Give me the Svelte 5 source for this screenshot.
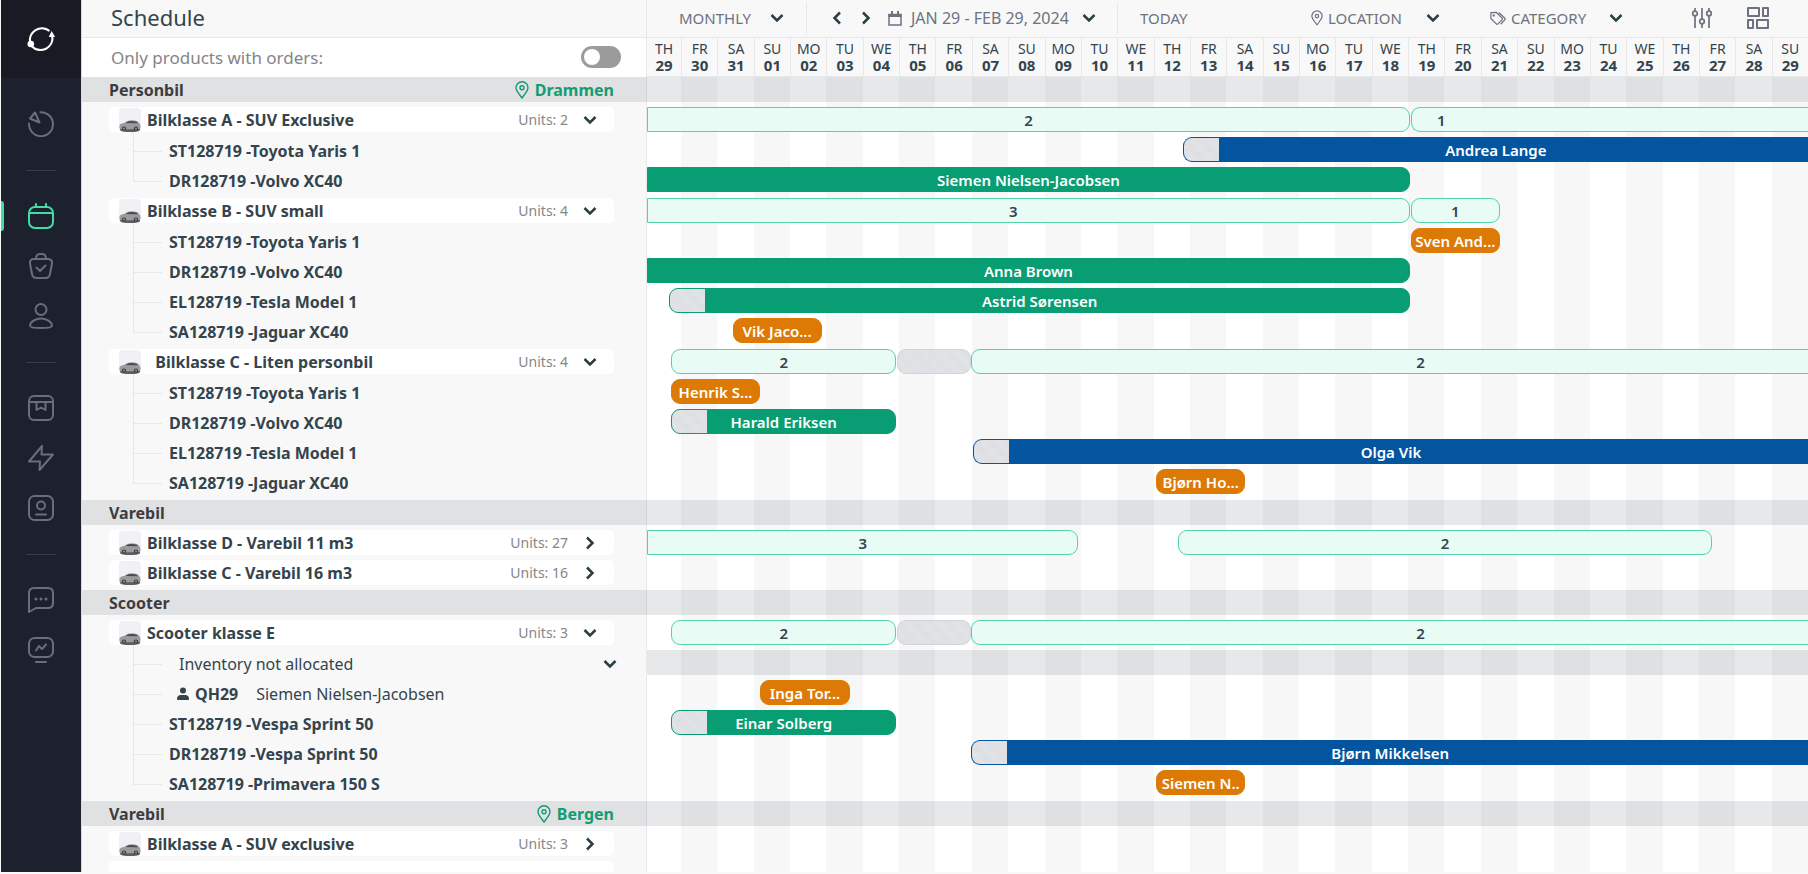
<script>
  // Day 0 is the left edge of the 30th; the 29th is the narrower first column.
  const FIRST = 34;
  const DAYS = 31;
  const EDGE = 31;

  const names = ['TH', 'FR', 'SA', 'SU', 'MO', 'TU', 'WE'];
  const days = Array.from({ length: 32 }, (_, i) => ({
    name: names[i % 7],
    num: String(i < 3 ? i + 29 : i - 2).padStart(2, '0')
  }));

  let onlyWithOrders = $state(false);
  let inventoryOpen = $state(true);

  let sections = $state([
    {
      title: 'Personbil',
      place: 'Drammen',
      categories: [
        {
          name: 'Bilklasse A - SUV Exclusive', units: 2, open: true,
          bars: [
            { kind: 'count', from: null, to: 20.05, text: '2' },
            { kind: 'count', from: 20.07, to: EDGE, text: '1', label: 15 }
          ],
          rows: [
            { name: 'ST128719 -Toyota Yaris 1', bars: [{ kind: 'blue', from: 13.8, to: EDGE, text: 'Andrea Lange', prep: true }] },
            { name: 'DR128719 -Volvo XC40', bars: [{ kind: 'green', from: null, to: 20.05, text: 'Siemen Nielsen-Jacobsen' }] }
          ]
        },
        {
          name: 'Bilklasse B - SUV small', units: 4, open: true,
          bars: [
            { kind: 'count', from: null, to: 20.05, text: '3', label: 96 },
            { kind: 'count', from: 20.07, to: 22.53, text: '1' }
          ],
          rows: [
            { name: 'ST128719 -Toyota Yaris 1', bars: [{ kind: 'orange', from: 20.07, to: 22.53, text: 'Sven And...' }] },
            { name: 'DR128719 -Volvo XC40', bars: [{ kind: 'green', from: null, to: 20.05, text: 'Anna Brown' }] },
            { name: 'EL128719 -Tesla Model 1', bars: [{ kind: 'green', from: -0.32, to: 20.05, text: 'Astrid Sørensen', prep: true }] },
            { name: 'SA128719 -Jaguar XC40', bars: [{ kind: 'orange', from: 1.42, to: 3.87, text: 'Vik Jaco...' }] }
          ]
        },
        {
          name: '\u00a0\u00a0Bilklasse C - Liten personbil', units: 4, open: true,
          bars: [
            { kind: 'count', from: -0.27, to: 5.92, text: '2' },
            { kind: 'idle', from: 5.93, to: 7.98, text: '' },
            { kind: 'count', from: 7.99, to: 32.7, text: '2' }
          ],
          rows: [
            { name: 'ST128719 -Toyota Yaris 1', bars: [{ kind: 'orange', from: -0.27, to: 2.17, text: 'Henrik S...' }] },
            { name: 'DR128719 -Volvo XC40', bars: [{ kind: 'green', from: -0.27, to: 5.92, text: 'Harald Eriksen', prep: true }] },
            { name: 'EL128719 -Tesla Model 1', bars: [{ kind: 'blue', from: 8.03, to: EDGE, text: 'Olga Vik', prep: true }] },
            { name: 'SA128719 -Jaguar XC40', bars: [{ kind: 'orange', from: 13.07, to: 15.52, text: 'Bjørn Ho...' }] }
          ]
        }
      ]
    },
    {
      title: 'Varebil',
      categories: [
        {
          name: 'Bilklasse D - Varebil 11 m3', units: 27, open: false,
          bars: [
            { kind: 'count', from: null, to: 10.93, text: '3' },
            { kind: 'count', from: 13.68, to: 28.35, text: '2' }
          ],
          rows: []
        },
        { name: 'Bilklasse C - Varebil 16 m3', units: 16, open: false, bars: [], rows: [] }
      ]
    },
    {
      title: 'Scooter',
      categories: [
        {
          name: 'Scooter klasse E', units: 3, open: true,
          bars: [
            { kind: 'count', from: -0.27, to: 5.92, text: '2' },
            { kind: 'idle', from: 5.93, to: 7.98, text: '' },
            { kind: 'count', from: 7.99, to: 32.7, text: '2' }
          ],
          rows: [
            { name: 'Inventory not allocated', inventory: true, bars: [] },
            { name: 'QH29', customer: 'Siemen Nielsen-Jacobsen', bars: [{ kind: 'orange', from: 2.18, to: 4.64, text: 'Inga Tor...' }] },
            { name: 'ST128719 -Vespa Sprint 50', bars: [{ kind: 'green', from: -0.27, to: 5.92, text: 'Einar Solberg', prep: true }] },
            { name: 'DR128719 -Vespa Sprint 50', bars: [{ kind: 'blue', from: 7.99, to: EDGE, text: 'Bjørn Mikkelsen', prep: true }] },
            { name: 'SA128719 -Primavera 150 S', bars: [{ kind: 'orange', from: 13.07, to: 15.52, text: 'Siemen N..' }] }
          ]
        }
      ]
    },
    {
      title: 'Varebil',
      place: 'Bergen',
      categories: [
        { name: 'Bilklasse A - SUV exclusive', units: 3, open: false, bars: [], rows: [] },
        { name: '', open: false, bars: [], rows: [] }
      ]
    }
  ]);

  function place(bar) {
    const from = bar.from ?? 0;
    const left = bar.from === null ? '0px' : `calc(${FIRST}px + (100% - ${FIRST}px) * ${from / DAYS})`;
    const extra = bar.from === null ? `${FIRST}px + ` : '';
    return `left: ${left}; width: calc(${extra}(100% - ${FIRST}px) * ${(bar.to - from) / DAYS})`;
  }
</script>

{#snippet chevron(dir)}
  <svg class="chevron {dir}" viewBox="0 0 14 14" width="14" height="14" aria-hidden="true">
    <path d="M1.500 4 7 9.500 12.500 4" />
  </svg>
{/snippet}

{#snippet pin(w, h)}
  <svg class="line" viewBox="0 0 14 18" width={w} height={h} aria-hidden="true">
    <path d="M7 17C4.500 13.500 1 10 1 6.800a6 6 0 0 1 12 0C13 10 9.500 13.500 7 17z" />
    <circle cx="7" cy="6.800" r="2" />
  </svg>
{/snippet}

{#snippet lane(bars)}
  {#each bars as bar}
    <div
      class="bar {bar.kind}"
      class:cut-left={bar.from === null}
      class:cut-right={bar.to === EDGE}
      style={place(bar)}
    >
      {#if bar.prep}<i class="prep"></i>{/if}
      <span style:width={bar.label ? bar.label + '%' : null}>{bar.text}</span>
    </div>
  {/each}
{/snippet}

<div class="app">
  <nav class="sidebar">
    <a class="logo" href="#home" aria-label="Home">
      <svg viewBox="0 0 28 28" width="28" height="28">
        <g fill="none" stroke="#fff" stroke-width="2.200">
          <path d="M22.500 6A12 12 0 0 0 3.200 18" />
          <path d="M5 21.500A12 12 0 0 0 25.300 11" />
        </g>
        <circle cx="3.800" cy="19" r="3.300" fill="#fff" />
        <path d="M24.600 6 28.200 12H21.800z" fill="#fff" />
      </svg>
    </a>
    <a class="item" href="#dashboard" aria-label="Dashboard">
      <svg viewBox="0 0 26 26" width="26" height="26">
        <path d="M12.500 1.200A12 12 0 1 1 1 12.500M2 7.500 7 1.500 11.500 11.500z" />
      </svg>
    </a>
    <hr />
    <a class="item active" href="#schedule" aria-label="Schedule">
      <svg viewBox="0 0 26 26" width="26" height="26">
        <rect x="1" y="4" width="24" height="21" rx="6" />
        <path d="M1.500 10H24.500M8 4V1M18 4V1" />
      </svg>
    </a>
    <a class="item" href="#orders" aria-label="Orders">
      <svg viewBox="0 0 26 26" width="26" height="26">
        <path d="M5.500 6H20.500Q24.500 6.500 24 10.500L22 21Q21.300 25 17.500 25H8.500Q4.700 25 4 21L2 10.500Q1.500 6.500 5.500 6zM8 6Q8 1 12 1H14Q18 1 18 6M8.500 14.500 12 18 17.500 12.500" />
      </svg>
    </a>
    <a class="item" href="#customers" aria-label="Customers">
      <svg viewBox="0 0 26 26" width="26" height="26">
        <circle cx="13" cy="6.500" r="5.500" />
        <path d="M13 15.500C18 15.500 24 19 24 22.500C24 24.500 20 25 13 25S2 24.500 2 22.500C2 19 8 15.500 13 15.500z" />
      </svg>
    </a>
    <hr />
    <a class="item" href="#products" aria-label="Products">
      <svg viewBox="0 0 26 26" width="26" height="26">
        <rect x="1" y="1" width="24" height="24" rx="5" />
        <path d="M1.500 7H24.500M8.500 7V15L13 12.500 17.500 15V7" />
      </svg>
    </a>
    <a class="item" href="#automation" aria-label="Automation">
      <svg viewBox="0 0 26 26" width="26" height="26">
        <path d="M14 1 1 16.500H12L11.500 25 25 9.500H13.500z" />
      </svg>
    </a>
    <a class="item" href="#contacts" aria-label="Contacts">
      <svg viewBox="0 0 26 26" width="26" height="26">
        <rect x="1" y="1" width="24" height="24" rx="5.500" />
        <circle cx="13" cy="10.500" r="4" />
        <path d="M8 19.500H18" />
      </svg>
    </a>
    <hr />
    <a class="item" href="#messages" aria-label="Messages">
      <svg viewBox="0 0 26 26" width="26" height="26">
        <path d="M1 25V6Q1 1 6 1H20Q25 1 25 6V16Q25 21 20 21H8z" />
        <path class="dots" d="M8 12h.010M13 12h.010M18 12h.010" />
      </svg>
    </a>
    <a class="item" href="#reports" aria-label="Reports">
      <svg viewBox="0 0 26 26" width="26" height="26">
        <rect x="1" y="1" width="24" height="19" rx="5.500" />
        <path d="M8 13.500 11 9 14 12 18 7.500M8 25H18" />
      </svg>
    </a>
  </nav>

  <main>
    <header class="row top">
      <h1>Schedule</h1>
      <div class="toolbar">
        <div class="period">
          <label class="pick">
            <select aria-label="View"><option>MONTHLY</option></select>
            {@render chevron('down')}
          </label>
        </div>
        <div class="dates">
          <button aria-label="Previous">{@render chevron('left')}</button>
          <button aria-label="Next">{@render chevron('right')}</button>
          <button class="range">
            <svg viewBox="0 0 14 15" width="14" height="15" aria-hidden="true">
              <path d="M1 3.500H13V14H1z" fill="none" stroke="currentColor" stroke-width="1.500" />
              <path d="M.500 3H13.500V6H.500zM3 0H5V4H3zM9 0H11V4H9z" fill="currentColor" />
            </svg>
            JAN 29 - FEB 29, 2024
            {@render chevron('down')}
          </button>
        </div>
        <button class="today">TODAY</button>
        <div class="filters">
          <label class="pick location">
            {@render pin(12, 16)}
            <select aria-label="Location"><option>LOCATION</option></select>
            {@render chevron('down')}
          </label>
          <label class="pick category">
            <svg class="line" viewBox="0 0 18 16" width="16" height="15" aria-hidden="true">
              <path d="M1 1.500 7 1 13.500 7.500Q14.500 8.500 13.500 9.500L9 14Q8 15 7 14L1 8zM10 1.200 16.500 7.500Q17.500 8.500 16.500 9.500L12 14.500" />
              <circle cx="4.200" cy="4.600" r=".6" />
            </svg>
            <select aria-label="Category"><option>CATEGORY</option></select>
            {@render chevron('down')}
          </label>
          <button aria-label="Settings">
            <svg class="line medium" viewBox="0 0 22 22" width="22" height="22">
              <path d="M4 1V4M4 9V21M11 1V12M11 17V21M18 1V4M18 9V21" />
              <circle cx="4" cy="6.500" r="2.300" />
              <circle cx="11" cy="14.500" r="2.300" />
              <circle cx="18" cy="6.500" r="2.300" />
            </svg>
          </button>
          <button aria-label="Layout">
            <svg class="line thick" viewBox="0 0 22 22" width="22" height="22">
              <path d="M1 1H12V9H1zM16 1H21V9H16zM1 13H6V21H1zM10 13H21V21H10z" />
            </svg>
          </button>
        </div>
      </div>
    </header>

    <div class="row sub">
      <label class="only">
        Only products with orders:
        <input type="checkbox" bind:checked={onlyWithOrders} />
      </label>
      <div class="days cols">
        {#each days as day}
          <div class="day">{day.name}<b>{day.num}</b></div>
        {/each}
      </div>
    </div>

    <div class="board">
      <div class="stripes row" aria-hidden="true">
        <div class="panel"></div>
        <div class="cols">
          {#each days as _}<i></i>{/each}
        </div>
      </div>

      {#each sections as section}
        <section>
          <div class="band">
            <h2>{section.title}</h2>
            {#if section.place}
              <span class="place">{@render pin(14, 18)}{section.place}</span>
            {/if}
          </div>
          {#each section.categories as cat}
            <div class="row line-row">
              <div class="card">
                {#if cat.name}
                  <svg class="thumb" viewBox="0 0 22 24" width="22" height="24" aria-hidden="true">
                    <rect width="22" height="24" rx="4" fill="#f1f1f5" />
                    <path d="M1 20.500H21V22Q20 24 11 24T1 22z" fill="#5d5d5f" />
                    <path d="M.500 17.500Q1 15.500 5 15L9 12.700Q14 11.800 18.500 13.200L21 16Q22 19 21 21L2 21.500Q0 21 .500 17.500z" fill="#9b9b9d" />
                    <path d="M6.500 15 9.500 13.300Q14 12.600 17.500 13.700L19 15.300z" fill="#4c4c50" />
                    <circle cx="5" cy="20.500" r="2.100" fill="#38383b" />
                    <circle cx="17" cy="20.500" r="2.100" fill="#38383b" />
                    <circle cx="5" cy="20.500" r=".9" fill="#a5a5a8" />
                    <circle cx="17" cy="20.500" r=".9" fill="#a5a5a8" />
                  </svg>
                  <h3>{cat.name}</h3>
                  <span class="units">Units: {cat.units}</span>
                  <button aria-label="Toggle {cat.name}" aria-expanded={cat.open} onclick={() => (cat.open = !cat.open)}>
                    {@render chevron(cat.open ? 'down' : 'right')}
                  </button>
                {/if}
              </div>
              <div class="lane">{@render lane(cat.bars)}</div>
            </div>
            {#if cat.open}
              <ul>
                {#each cat.rows as row}
                  <li class="row" class:inventory={row.inventory}>
                    <div class="unit">
                      {#if row.inventory}
                        <span class="plain">{row.name}</span>
                        <button aria-label="Toggle inventory" aria-expanded={inventoryOpen} onclick={() => (inventoryOpen = !inventoryOpen)}>
                          {@render chevron('down')}
                        </button>
                      {:else if row.customer}
                        <svg class="person" viewBox="0 0 12 14" width="12" height="14" aria-hidden="true">
                          <circle cx="6" cy="3.500" r="3" />
                          <path d="M0 12Q0 8 4 8H8Q12 8 12 12Q12 13 11 13H1Q0 13 0 12z" />
                        </svg>
                        <strong>{row.name}</strong>
                        <span class="customer">{row.customer}</span>
                      {:else}
                        <strong>{row.name}</strong>
                      {/if}
                    </div>
                    <div class="lane">{@render lane(row.bars)}</div>
                  </li>
                {/each}
              </ul>
            {/if}
          {/each}
        </section>
      {/each}
    </div>
  </main>
</div>

<style>
  :global(body) {
    margin: 0;
    background: #f8f8f9;
  }

  .app {
    display: flex;
    height: 100vh;
    padding: 0 0 2px 1px;
    box-sizing: border-box;
    overflow: hidden;
    font-family: 'Noto Sans', 'Open Sans', sans-serif;
    font-size: 16px;
    color: #33444c;
  }

  button,
  select {
    padding: 0;
    border: 0;
    background: none;
    font: inherit;
    color: inherit;
    appearance: none;
    cursor: pointer;
  }

  svg {
    display: block;
    flex: none;
  }

  h1,
  h2,
  h3,
  ul {
    margin: 0;
    padding: 0;
  }

  .sidebar {
    flex: none;
    width: 80px;
    background: #1c212d;
    border-right: 1px solid #d5dae2;
  }

  .logo {
    display: flex;
    align-items: center;
    justify-content: center;
    height: 78px;
    margin-bottom: 21px;
    background: #181a24;
  }

  .item {
    display: flex;
    align-items: center;
    justify-content: center;
    height: 50px;
    fill: none;
    stroke: #686e7b;
    stroke-width: 2;
    stroke-linecap: round;
    stroke-linejoin: round;
  }

  .item.active {
    position: relative;
    stroke: #43dba6;
  }

  .item.active::before {
    content: '';
    position: absolute;
    left: 0;
    top: 10px;
    width: 3px;
    height: 30px;
    border-radius: 0 3px 3px 0;
    background: #43dba6;
  }

  .item .dots {
    stroke-width: 3;
  }

  hr {
    width: 30px;
    height: 1px;
    margin: 21px auto 20px;
    border: 0;
    background: #363c49;
  }

  main {
    flex: 1;
    min-width: 0;
    display: flex;
    flex-direction: column;
  }

  .row {
    display: grid;
    grid-template-columns: 565px minmax(0, 1fr);
  }

  .top {
    height: 37px;
    border-bottom: 1px solid #e7e8e9;
    background: #f8f8f8;
  }

  h1 {
    padding-left: 29px;
    border-right: 1px solid #e9e9eb;
    font-size: 22px;
    line-height: 34px;
    font-weight: 400;
  }

  .toolbar {
    display: flex;
    align-items: center;
    height: 36px;
    font-size: 15px;
    color: #6d7280;
    white-space: nowrap;
  }

  .period,
  .dates {
    display: flex;
    align-items: center;
    box-sizing: border-box;
    height: 32px;
    border-right: 1px solid #e7e8ea;
  }

  .period {
    width: 160px;
    padding-left: 32px;
  }

  .dates {
    width: 311px;
    padding-left: 23px;
    gap: 15px;
  }

  .pick {
    display: flex;
    align-items: center;
    gap: 5px;
  }

  .pick select {
    width: 93px;
  }

  .period select {
    width: 86px;
  }

  .range {
    display: flex;
    align-items: center;
    gap: 9px;
    font-size: 16px;
  }

  .range .chevron {
    margin-left: 4px;
  }

  .today {
    margin-left: 22px;
  }

  .filters {
    display: flex;
    align-items: center;
    margin-left: auto;
    margin-right: 39px;
    gap: 34px;
  }

  .category {
    margin: 0 34px 0 16px;
  }

  .chevron {
    fill: none;
    stroke: #2c3e45;
    stroke-width: 2.5;
  }

  .chevron.left {
    transform: rotate(90deg);
  }

  .chevron.right {
    transform: rotate(-90deg);
  }

  .line {
    fill: none;
    stroke: currentColor;
    stroke-width: 1.4;
    stroke-linejoin: round;
  }

  .line.medium {
    stroke-width: 1.7;
  }

  .line.thick {
    stroke-width: 2;
  }

  .sub {
    height: 39px;
    background: #fff;
  }

  .only {
    display: flex;
    align-items: center;
    justify-content: space-between;
    padding: 0 25px 1px 29px;
    border-right: 1px solid #e9e9eb;
    font-size: 17px;
    color: #848586;
  }

  .only input {
    width: 40px;
    height: 22px;
    margin: 0;
    padding: 3px;
    border-radius: 11px;
    box-sizing: border-box;
    appearance: none;
    background: #9b9b9b;
    cursor: pointer;
  }

  .only input::before {
    content: '';
    display: block;
    width: 16px;
    height: 16px;
    border-radius: 50%;
    background: #fff;
  }

  .only input:checked {
    background: #07a074;
    padding-left: 21px;
  }

  .cols {
    display: grid;
    grid-template-columns: 34px repeat(31, minmax(0, 1fr));
  }

  .day {
    display: flex;
    flex-direction: column;
    align-items: center;
    justify-content: center;
    border-left: 1px solid #e7e8e9;
    border-bottom: 1px solid #e7e8e9;
    background: #f8f8f9;
    font-size: 14px;
    line-height: 16px;
  }

  .day:first-child {
    border-left: 0;
  }

  .day b {
    font-size: 15px;
    font-weight: 700;
  }

  .board {
    position: relative;
    flex: 1;
    min-height: 0;
    overflow: hidden;
  }

  .stripes {
    position: absolute;
    inset: 0;
    background: #fff;
  }

  .panel {
    border-right: 1px solid #e9e9eb;
    background: #f8f8f8;
  }

  .stripes i:nth-child(even) {
    background: #f7f7f8;
  }

  section {
    position: relative;
  }

  .band {
    display: flex;
    align-items: center;
    justify-content: space-between;
    box-sizing: border-box;
    width: 100%;
    height: 25px;
    margin-bottom: 5px;
    padding-left: 27px;
    background: rgba(20, 25, 40, 0.1);
  }

  h2 {
    font-size: 16px;
    font-weight: 700;
    color: #3c3c40;
  }

  .place {
    display: flex;
    align-items: center;
    gap: 6px;
    margin-right: calc(100% - 505px);
    font-weight: 700;
    color: #149c72;
  }

  .line-row {
    height: 30px;
  }

  .card {
    display: flex;
    align-items: center;
    box-sizing: border-box;
    height: 25px;
    margin: 0 33px 0 27px;
    padding-left: 10px;
    border-radius: 5px;
    background: #fff;
  }

  .thumb {
    margin-right: 6px;
  }

  h3 {
    font-size: 16px;
    font-weight: 700;
  }

  .units {
    margin-left: auto;
    font-size: 14px;
    color: #858687;
  }

  .card button {
    margin: 0 17px 0 15px;
  }

  .lane {
    position: relative;
    height: 25px;
    overflow: clip;
    overflow-clip-margin: 2px;
  }

  ul {
    list-style: none;
    padding-bottom: 1px;
  }

  li {
    height: 30px;
  }

  .unit {
    position: relative;
    display: flex;
    align-items: center;
    height: 28px;
    padding: 0 30px 0 87px;
    font-size: 16px;
  }

  .unit strong {
    font-weight: 700;
  }

  /* tree lines */
  .unit::before {
    content: '';
    position: absolute;
    left: 51px;
    top: -5px;
    width: 28px;
    height: 19px;
    border-left: 1px solid #e6e8e9;
    border-bottom: 1px solid #e6e8e9;
  }

  li:not(:last-child) .unit::after {
    content: '';
    position: absolute;
    left: 51px;
    top: 14px;
    height: 16px;
    border-left: 1px solid #e6e8e9;
  }

  .plain {
    padding-left: 10px;
    margin-right: auto;
  }

  .inventory .lane {
    background: rgba(20, 25, 40, 0.1);
  }

  .person {
    margin: 0 6px 0 8px;
    fill: #33444c;
  }

  .customer {
    margin-left: 18px;
  }

  .bar {
    position: absolute;
    top: 0;
    display: flex;
    align-items: center;
    box-sizing: border-box;
    height: 25px;
    border: 1px solid;
    border-radius: 9px;
    overflow: hidden;
    font-size: 15px;
    font-weight: 600;
    color: #fff;
    white-space: nowrap;
  }

  .bar span {
    width: 100%;
    text-align: center;
  }

  .bar.cut-left {
    border-top-left-radius: 0;
    border-bottom-left-radius: 0;
  }

  .bar.cut-right {
    border-right: 0;
    border-top-right-radius: 0;
    border-bottom-right-radius: 0;
  }

  .count {
    border-color: #55d3a8;
    background: #e8fbf5;
    color: #33444c;
  }

  .green {
    border-color: #089d72;
    background: #089d72;
  }

  .blue {
    border-color: #04559f;
    background: #04559f;
  }

  .orange {
    border-color: #dd7a05;
    background: #dd7a05;
  }

  .idle,
  .prep {
    border-color: #d3d4d8;
    background: repeating-linear-gradient(45deg, #dddee1 0 1px, #e3e4e7 1px 2px);
  }

  .prep {
    position: absolute;
    left: 0;
    top: 0;
    bottom: 0;
    width: 35px;
  }
</style>
